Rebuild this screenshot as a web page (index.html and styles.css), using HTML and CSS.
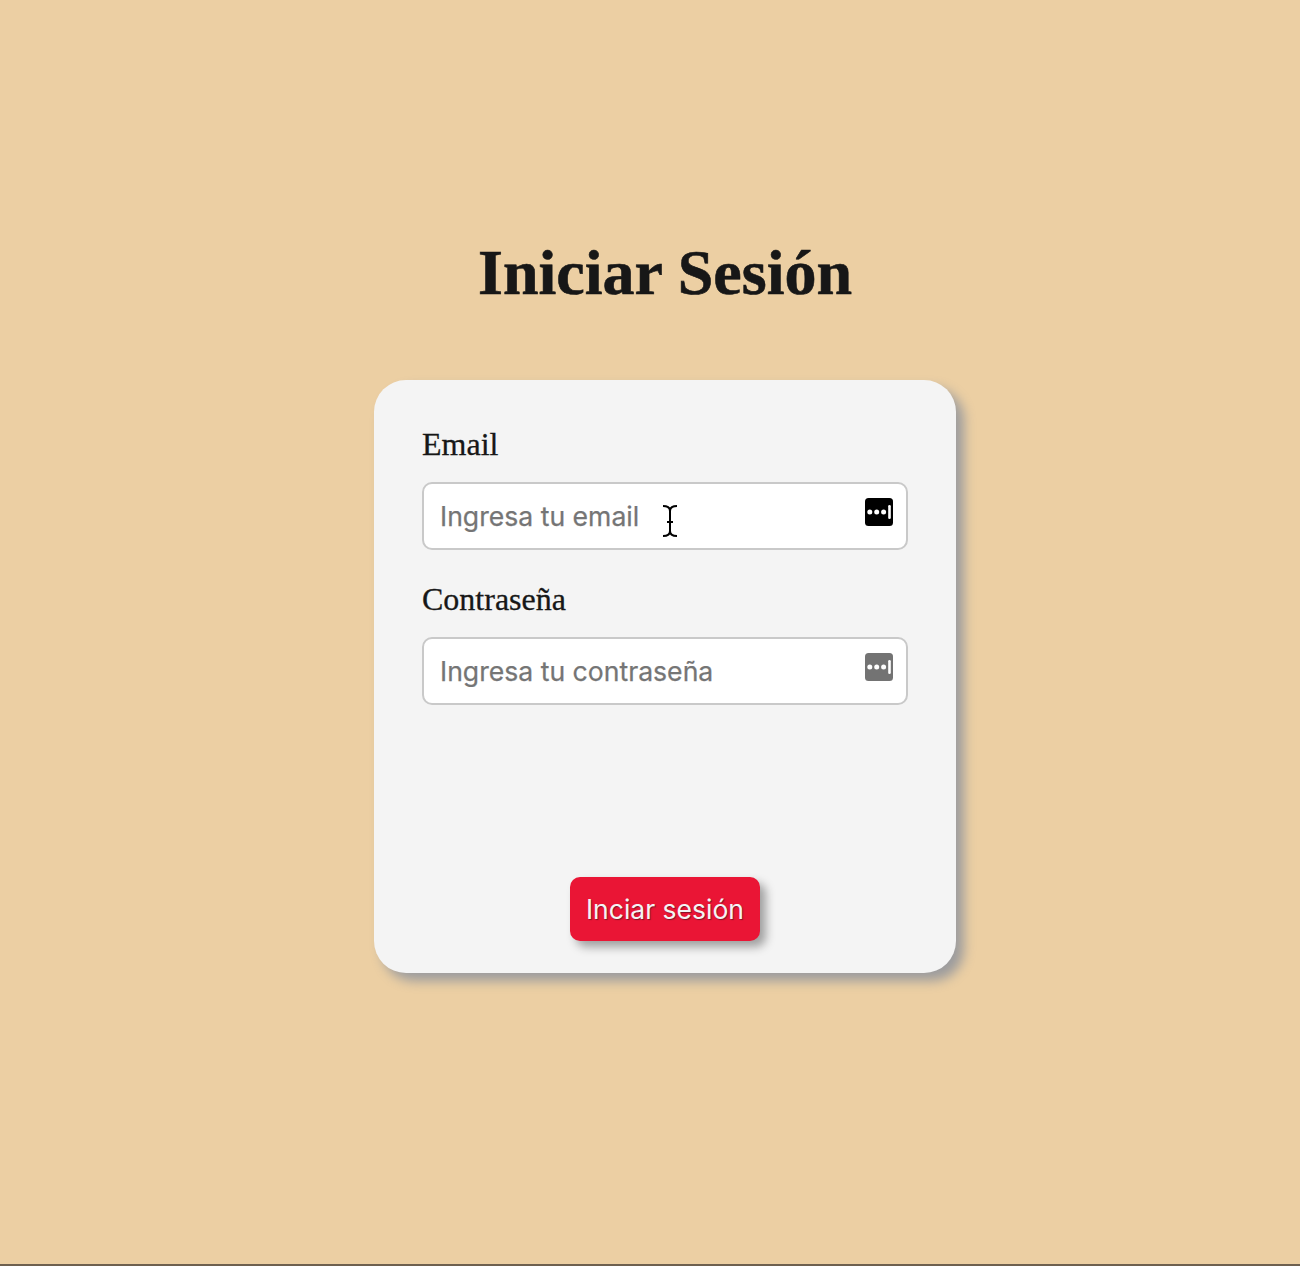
FILE: index.html
```html
<!DOCTYPE html>
<html lang="es">
<head>
<meta charset="utf-8">
<title>Iniciar Sesión</title>
<link rel="stylesheet" href="styles.css">
</head>
<body>
<main class="page">
  <h1 class="title">Iniciar Sesión</h1>
  <form class="card">
    <label class="label" for="email">Email</label>
    <div class="field">
      <input class="input" id="email" type="email" placeholder="Ingresa tu email">
      <svg class="manager" viewBox="0 0 28 28"><rect width="28" height="28" rx="3.5"/><g fill="#fff"><circle cx="4.800" cy="14" r="2.500"/><circle cx="11.700" cy="14" r="2.500"/><circle cx="18.600" cy="14" r="2.500"/><rect x="23.200" y="7" width="2.600" height="14" rx="1.300"/></g></svg>
      <svg class="cursor" viewBox="0 0 16 34" fill="none" stroke="#000" stroke-width="2"><path d="M1 2C5 2 8 3.500 8 7V27C8 30.500 5 32 1 32M15 2C11 2 8 3.500 8 7M8 27C8 30.500 11 32 15 32M5 18H11"/></svg>
    </div>
    <label class="label" for="password">Contraseña</label>
    <div class="field">
      <input class="input" id="password" type="password" placeholder="Ingresa tu contraseña">
      <svg class="manager muted" viewBox="0 0 28 28"><rect width="28" height="28" rx="3.5"/><g fill="#fff"><circle cx="4.800" cy="14" r="2.500"/><circle cx="11.700" cy="14" r="2.500"/><circle cx="18.600" cy="14" r="2.500"/><rect x="23.200" y="7" width="2.600" height="14" rx="1.300"/></g></svg>
    </div>
    <button class="submit" type="button">Inciar sesión</button>
  </form>
</main>
</body>
</html>
```
FILE: styles.css
```css
* {
  box-sizing: border-box;
}

body {
  margin: 0;
  background: #eccfa3;
  color: #171717;
  font-family: "Liberation Serif", "Times New Roman", serif;
}

.page {
  display: flex;
  flex-direction: column;
  align-items: center;
  height: 1266px;
  padding: 236px 0 0 30px;
  border-bottom: 2px solid #6e604f;
}

.title {
  margin: 0 0 70px;
  font-size: 64px;
  line-height: 74px;
  white-space: nowrap;
  -webkit-text-stroke: 0.6px #171717;
}

.card {
  display: flex;
  flex-direction: column;
  width: 582px;
  height: 593px;
  padding: 46px 48px 32px;
  border-radius: 32px;
  background: #f4f4f4;
  box-shadow: 8px 8px 12px #9c9c9e;
}

.label {
  margin-bottom: 20px;
  font-size: 32px;
  line-height: 36px;
  -webkit-text-stroke: 0.3px #171717;
}

.field {
  position: relative;
  height: 68px;
  margin-bottom: 31px;
}

.input {
  display: block;
  width: 100%;
  height: 68px;
  padding: 0 16px;
  border: 2px solid #c9c9c9;
  border-radius: 10px;
  background: #fff;
  font: 26.6px Inter, sans-serif;
}

.input::placeholder {
  color: #757575;
  opacity: 1;
  -webkit-text-stroke: 0.25px #757575;
}

.manager {
  position: absolute;
  top: 16px;
  right: 15px;
  width: 28px;
  height: 28px;
}

.muted {
  fill: #737373;
}

.cursor {
  position: absolute;
  top: 22px;
  left: 240px;
  width: 16px;
  height: 34px;
}

.submit {
  align-self: center;
  width: 190px;
  height: 64px;
  margin-top: auto;
  padding: 0;
  border: 0;
  border-radius: 10px;
  background: #ea1535;
  box-shadow: 6px 6px 10px #a0a0a0;
  color: #f4f4f4;
  font: 26.5px Inter, sans-serif;
  text-shadow: 1px 1px 1px rgba(60, 20, 30, 0.6);
  white-space: nowrap;
}
```
